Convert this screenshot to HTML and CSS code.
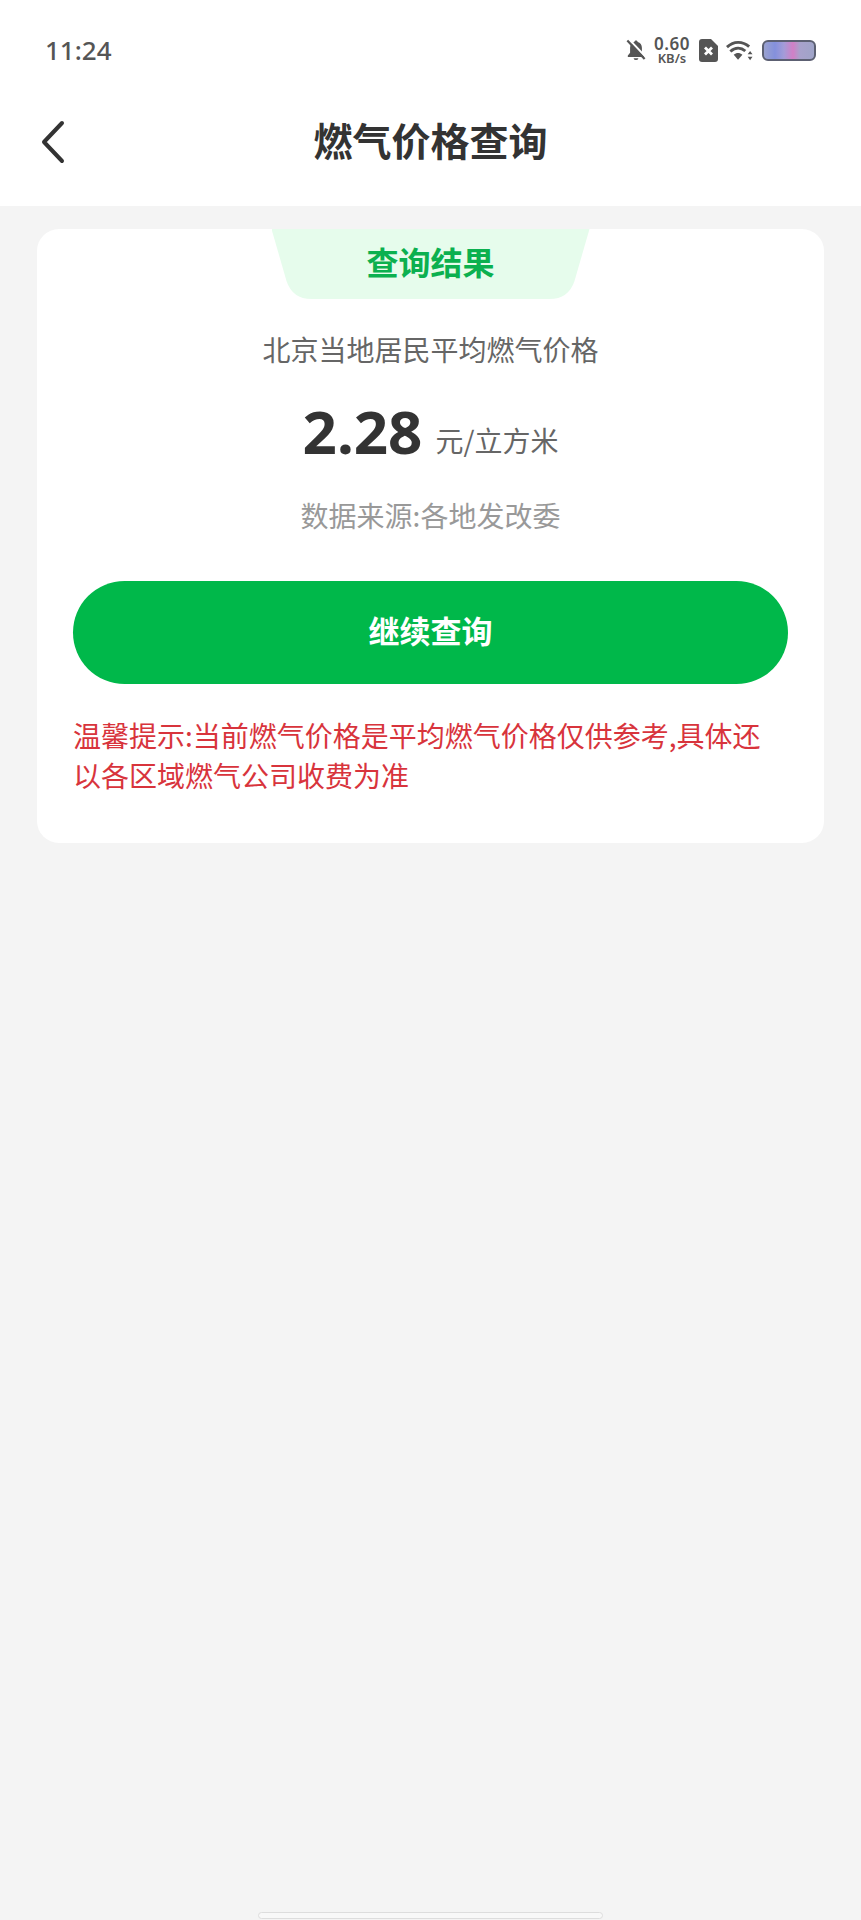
FILE: index.html
```html
<!DOCTYPE html>
<html lang="zh-CN">
<head>
  <meta charset="UTF-8">
  <meta name="viewport" content="width=device-width, initial-scale=1.0">
  <title>燃气价格查询</title>
  <link rel="stylesheet" href="styles.css">
</head>
<body>
  <div class="top">
    <div class="status">
      <span class="time">11:24</span>
      <div class="status-icons">
        <svg class="ic-bell" viewBox="0 0 22 24" width="20" height="22">
          <path d="M11 1.500c-1 0-1.800.7-1.900 1.700C6.300 4 4.500 6.500 4.500 9.500V15L2 18v1.800h18V18l-2.500-3V9.500c0-3-1.800-5.500-4.600-6.300C12.800 2.200 12 1.500 11 1.500zM8.300 21a2.800 2.800 0 0 0 5.400 0z" fill="#555"/>
          <path d="M3.500 0.500 L22 20" stroke="#fff" stroke-width="2.400"/>
          <path d="M1.500 1.500 L20.500 22" stroke="#555" stroke-width="2.400"/>
        </svg>
        <div class="speed"><span class="speed-num">0.60</span><span class="speed-unit">KB/s</span></div>
        <svg class="ic-sim" viewBox="0 0 19 23" width="19" height="23">
          <path d="M3 0h9l7 7v13a3 3 0 0 1-3 3H3a3 3 0 0 1-3-3V3a3 3 0 0 1 3-3z" fill="#555"/>
          <path d="M6 8.500 L13 15.500 M13 8.500 L6 15.500" stroke="#fff" stroke-width="2.800"/>
        </svg>
        <svg class="ic-wifi" viewBox="0 0 28 21" width="27" height="21">
          <path d="M1 7C8 0.500 17 0.500 24 6.500" fill="none" stroke="#555" stroke-width="3"/>
          <path d="M4.500 11.500c5-4.500 11-4.500 15.500-.5" fill="none" stroke="#555" stroke-width="3"/>
          <path d="M8 15c3-2.600 6-2.600 9 0L12.500 20z" fill="#555"/>
          <path d="M25 11l2.500 3.500h-5zM25 20.500l2.500-3.500h-5z" fill="#555"/>
        </svg>
        <div class="battery"></div>
      </div>
    </div>
    <div class="nav">
      <svg class="back" viewBox="0 0 24 44" width="24" height="44">
        <path d="M21 3 L3 22 L21 41" fill="none" stroke="#333" stroke-width="4" stroke-linecap="round" stroke-linejoin="round"/>
      </svg>
      <h1 class="nav-title">燃气价格查询</h1>
    </div>
  </div>

  <div class="content">
    <div class="card">
      <div class="tab">查询结果</div>
      <p class="label">北京当地居民平均燃气价格</p>
      <p class="price"><span class="price-num">2.28</span><span class="price-unit">元/立方米</span></p>
      <p class="source">数据来源:各地发改委</p>
      <button class="btn">继续查询</button>
      <p class="tip">温馨提示:当前燃气价格是平均燃气价格仅供参考,具体还以各区域燃气公司收费为准</p>
    </div>
  </div>

  <div class="home-bar"></div>
</body>
</html>
```

FILE: styles.css
```css
*, *::before, *::after {
  box-sizing: border-box;
}

html, body {
  margin: 0;
  height: 100%;
}

body {
  background: #f4f4f4;
  font-family: "Noto Sans CJK SC", "Noto Sans", sans-serif;
  height: 1920px;
  overflow: hidden;
  position: relative;
}

p, h1 {
  margin: 0;
}

.top {
  background: #fff;
  height: 206px;
}

.status {
  height: 100px;
  padding: 0 45px;
  display: flex;
  align-items: center;
  justify-content: space-between;
}

.time {
  font-family: "Noto Sans", sans-serif;
  font-size: 26px;
  font-weight: 500;
  color: #555;
}

.status-icons {
  display: flex;
  align-items: center;
  gap: 8px;
}

.speed {
  display: flex;
  flex-direction: column;
  align-items: center;
  width: 36px;
  margin-right: 1px;
  color: #555;
  font-family: "Noto Sans", sans-serif;
  font-weight: 600;
}

.speed-num {
  font-size: 17px;
  line-height: 16px;
  letter-spacing: 0.5px;
}

.speed-unit {
  font-size: 13px;
  line-height: 13px;
}

.battery {
  width: 54px;
  height: 21px;
  margin-left: 1px;
  border: 2px solid #5c6072;
  border-radius: 6px;
  background: linear-gradient(90deg, #9aa2d0 0%, #8490dc 22%, #a49cd8 40%, #d27fc6 58%, #a8a2cc 72%, #9fa4c8 100%);
}

.nav {
  height: 106px;
  display: flex;
  align-items: center;
  justify-content: center;
  position: relative;
  padding-bottom: 28px;
}

.back {
  position: absolute;
  left: 41px;
  top: 20px;
}

.nav-title {
  font-size: 39px;
  font-weight: 700;
  color: #333;
}

.content {
  padding: 23px 37px 0;
}

.card {
  background: #fff;
  border-radius: 22px;
  height: 614px;
  padding: 0 36px;
  display: flex;
  flex-direction: column;
  align-items: center;
}

.tab {
  width: 318px;
  height: 70px;
  flex: none;
  padding-bottom: 6px;
  background: #e6fcec;
  clip-path: path("M0 0 H318 L303 52 Q297 70 278 70 H40 Q21 70 15 52 Z");
  color: #0bb04f;
  font-size: 32px;
  font-weight: 700;
  display: flex;
  align-items: center;
  justify-content: center;
}

.label {
  margin-top: 30px;
  font-size: 28px;
  line-height: 40px;
  color: #666;
}

.price {
  margin-top: 26px;
  display: flex;
  align-items: center;
  gap: 13px;
  color: #333;
}

.price-num {
  font-family: "Noto Sans", sans-serif;
  font-size: 60px;
  font-weight: 700;
  line-height: 72px;
}

.price-unit {
  padding-top: 17px;
  font-size: 28px;
  color: #666;
}

.source {
  margin-top: 28px;
  font-size: 28px;
  line-height: 40px;
  color: #999;
}

.btn {
  margin-top: 46px;
  width: 715px;
  height: 103px;
  flex: none;
  padding: 0 0 6px;
  border: 0;
  border-radius: 52px;
  background: #00b84a;
  color: #fff;
  font-family: inherit;
  font-size: 31px;
  font-weight: 700;
}

.tip {
  margin-top: 31px;
  width: 715px;
  font-size: 28px;
  line-height: 40px;
  color: #d8343c;
}

.home-bar {
  position: absolute;
  left: 258px;
  top: 1912px;
  width: 345px;
  height: 7px;
  background: #f8f8f8;
  border: 1px solid #ddd;
  border-radius: 4px;
}
```
